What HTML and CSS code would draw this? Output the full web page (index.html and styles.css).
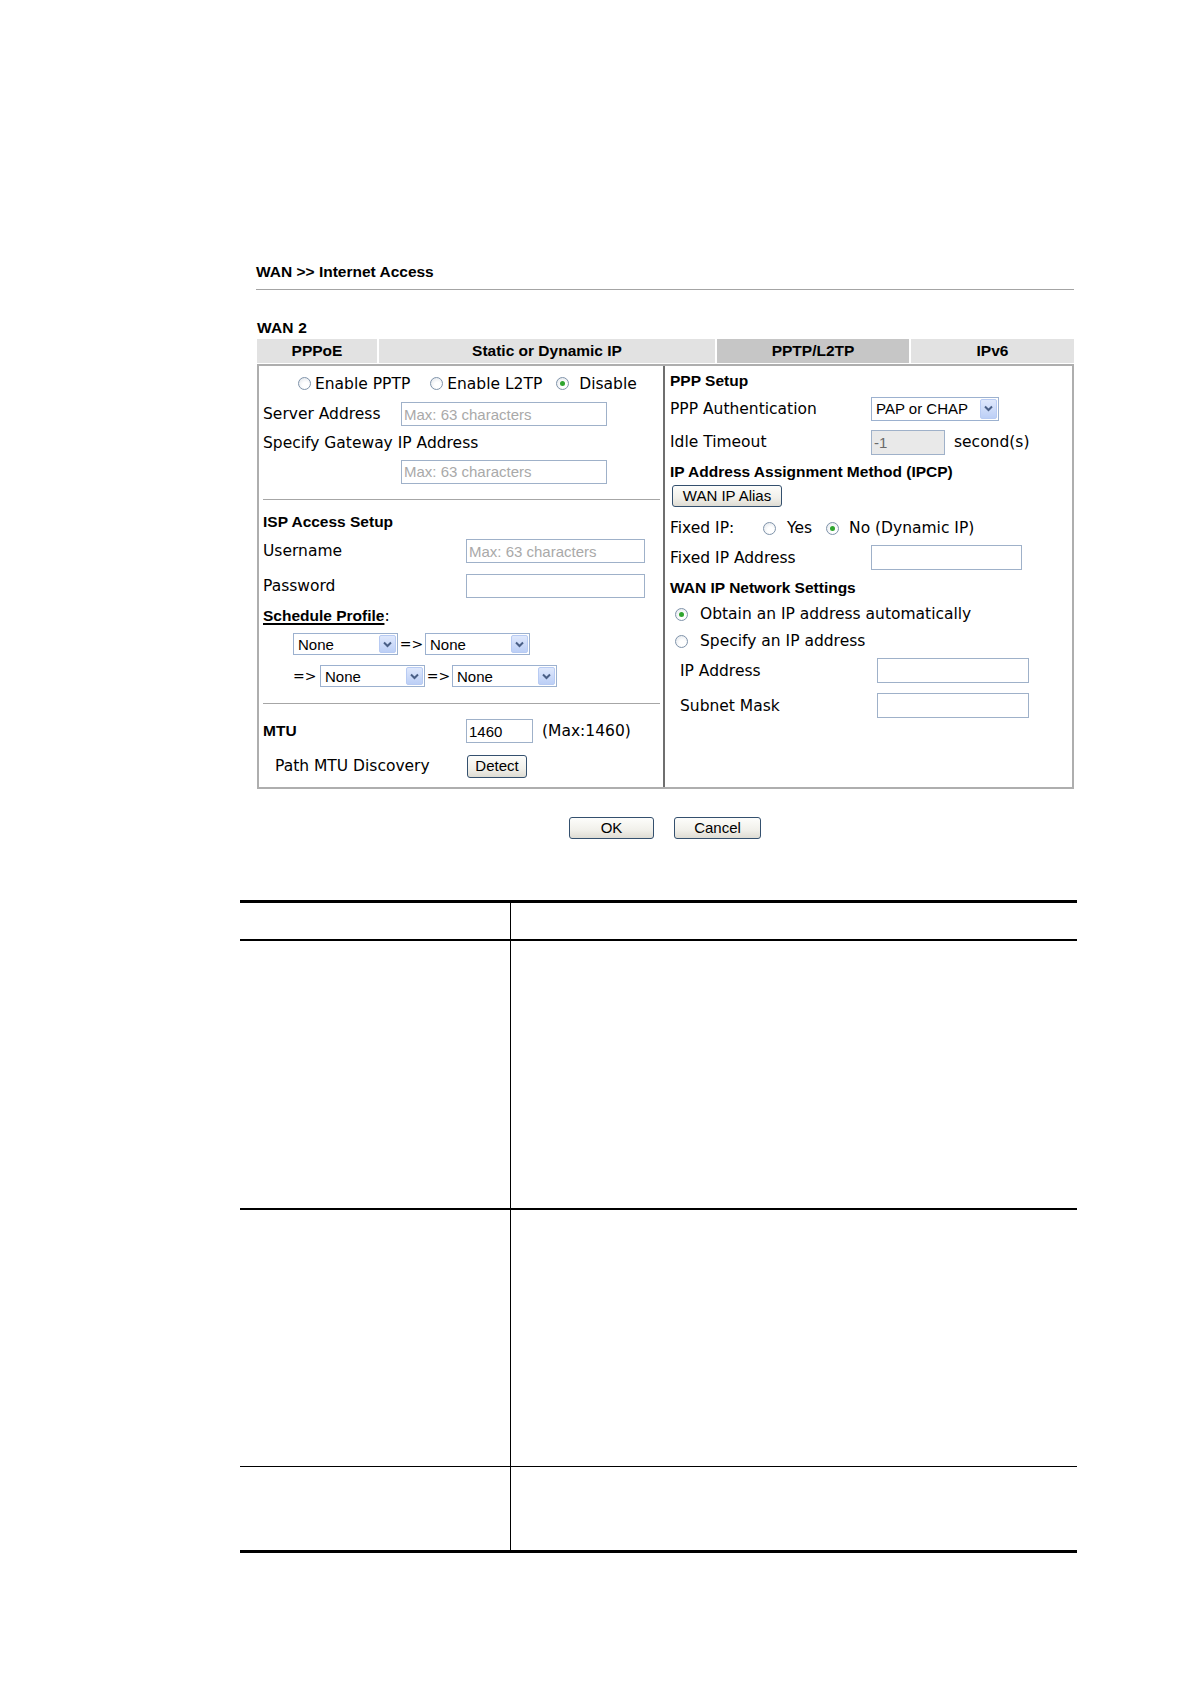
FILE: index.html
```html
<!DOCTYPE html>
<html>
<head>
<meta charset="utf-8">
<title>WAN &gt;&gt; Internet Access</title>
<link rel="stylesheet" href="styles.css">
</head>
<body>
<div class="sheet">
  <div class="title">WAN &gt;&gt; Internet Access</div>
  <div class="rule"></div>
  <div class="wan">WAN 2</div>
  <div class="tabs">
    <div class="tab">PPPoE</div>
    <div class="tab">Static or Dynamic IP</div>
    <div class="tab active">PPTP/L2TP</div>
    <div class="tab">IPv6</div>
  </div>
  <div class="panel">
    <div class="col left">
      <div class="row l1">
        <span class="radio r-first"></span><span class="rt t-pptp">Enable PPTP</span>
        <span class="radio"></span><span class="rt t-l2tp">Enable L2TP</span>
        <span class="radio on"></span><span class="rt t-dis">Disable</span>
      </div>
      <div class="row l2">
        <span class="lbl w138">Server Address</span>
        <input class="inp w206" type="text" placeholder="Max: 63 characters">
      </div>
      <div class="row l3"><span class="lbl">Specify Gateway IP Address</span></div>
      <div class="row l4">
        <span class="lbl w138"></span>
        <input class="inp w206" type="text" placeholder="Max: 63 characters">
      </div>
      <div class="sep sep1"></div>
      <div class="row l-isp"><span class="head">ISP Access Setup</span></div>
      <div class="row l-user">
        <span class="lbl w203">Username</span>
        <input class="inp w179" type="text" placeholder="Max: 63 characters">
      </div>
      <div class="row l-pass">
        <span class="lbl w203">Password</span>
        <input class="inp w179" type="password">
      </div>
      <div class="row l-sched"><span class="head u">Schedule Profile</span><span class="colon">:</span></div>
      <div class="row l-sel1">
        <span class="sel w105"><span class="sel-text">None</span><span class="sel-btn"><svg width="9" height="7" viewBox="0 0 9 7"><polyline points="1,1.5 4.5,5 8,1.5" fill="none" stroke="#4a5f86" stroke-width="2"/></svg></span></span>
        <span class="arrow">=&gt;</span>
        <span class="sel w105"><span class="sel-text">None</span><span class="sel-btn"><svg width="9" height="7" viewBox="0 0 9 7"><polyline points="1,1.5 4.5,5 8,1.5" fill="none" stroke="#4a5f86" stroke-width="2"/></svg></span></span>
      </div>
      <div class="row l-sel2">
        <span class="arrow a-lead">=&gt;</span>
        <span class="sel w105"><span class="sel-text">None</span><span class="sel-btn"><svg width="9" height="7" viewBox="0 0 9 7"><polyline points="1,1.5 4.5,5 8,1.5" fill="none" stroke="#4a5f86" stroke-width="2"/></svg></span></span>
        <span class="arrow">=&gt;</span>
        <span class="sel w105"><span class="sel-text">None</span><span class="sel-btn"><svg width="9" height="7" viewBox="0 0 9 7"><polyline points="1,1.5 4.5,5 8,1.5" fill="none" stroke="#4a5f86" stroke-width="2"/></svg></span></span>
      </div>
      <div class="sep sep2"></div>
      <div class="row l-mtu">
        <span class="lbl w203 head">MTU</span>
        <input class="inp w67" type="text" value="1460">
        <span class="lbl max">(Max:1460)</span>
      </div>
      <div class="row l-pmtu">
        <span class="lbl w192">Path MTU Discovery</span>
        <button class="btn detect">Detect</button>
      </div>
    </div>
    <div class="col right">
      <div class="row r-ppp"><span class="head">PPP Setup</span></div>
      <div class="row r-auth">
        <span class="lbl w201">PPP Authentication</span>
        <span class="sel w128 tall"><span class="sel-text">PAP or CHAP</span><span class="sel-btn"><svg width="9" height="7" viewBox="0 0 9 7"><polyline points="1,1.5 4.5,5 8,1.5" fill="none" stroke="#4a5f86" stroke-width="2"/></svg></span></span>
      </div>
      <div class="row r-idle">
        <span class="lbl w201">Idle Timeout</span>
        <input class="inp w74 dis" type="text" value="-1" disabled>
        <span class="lbl secs">second(s)</span>
      </div>
      <div class="row r-ipcp"><span class="head">IP Address Assignment Method (IPCP)</span></div>
      <div class="row r-alias"><button class="btn alias">WAN IP Alias</button></div>
      <div class="row r-fixed">
        <span class="lbl w93">Fixed IP:</span>
        <span class="radio"></span><span class="rt t-yes">Yes</span>
        <span class="radio on"></span><span class="rt t-no">No (Dynamic IP)</span>
      </div>
      <div class="row r-fixaddr">
        <span class="lbl w201">Fixed IP Address</span>
        <input class="inp w151" type="text">
      </div>
      <div class="row r-wannet"><span class="head">WAN IP Network Settings</span></div>
      <div class="row r-obtain">
        <span class="radio on r-ind"></span><span class="rt t-opt">Obtain an IP address automatically</span>
      </div>
      <div class="row r-spec">
        <span class="radio r-ind"></span><span class="rt t-opt">Specify an IP address</span>
      </div>
      <div class="row r-ip">
        <span class="lbl w197 ind">IP Address</span>
        <input class="inp w152" type="text">
      </div>
      <div class="row r-mask">
        <span class="lbl w197 ind">Subnet Mask</span>
        <input class="inp w152" type="text">
      </div>
    </div>
  </div>
  <div class="actions">
    <button class="btn ok">OK</button>
    <button class="btn cancel">Cancel</button>
  </div>
</div>
<table class="spec">
  <tr class="s-head"><td class="c1"></td><td class="c2"></td></tr>
  <tr class="s-r1"><td class="c1"></td><td class="c2"></td></tr>
  <tr class="s-r2"><td class="c1"></td><td class="c2"></td></tr>
  <tr class="s-r3"><td class="c1"></td><td class="c2"></td></tr>
</table>
</body>
</html>
```
FILE: styles.css
```css
html, body {
  margin: 0;
  padding: 0;
  background: #ffffff;
}
body {
  font-family: "DejaVu Sans", Verdana, sans-serif;
  font-size: 15.5px;
  color: #000;
}
.sheet {
  width: 818px;
  margin-left: 256px;
  padding-top: 263px;
}
.title {
  font: bold 15.5px/18px "Liberation Sans", Arial, sans-serif;
  height: 18px;
}
.rule {
  margin-top: 8px;
  border-top: 1px solid #a4a4a4;
}
.wan {
  margin-top: 29px;
  padding-left: 1px;
  font: bold 15.5px/18px "Liberation Sans", Arial, sans-serif;
  letter-spacing: 0.2px;
  height: 18px;
}
.tabs {
  margin: 2px 0 0 1px;
  height: 24px;
  display: grid;
  grid-template-columns: 120px 336px 192px 1fr;
  column-gap: 2px;
}
.tab {
  background: #e2e2e2;
  font: bold 15.5px/24px "Liberation Sans", Arial, sans-serif;
  text-align: center;
}
.tab.active {
  background: #c6c6c6;
}
.panel {
  margin: 1px 0 0 1px;
  border: 2px solid #aeaeae;
  height: 421px;
  display: grid;
  grid-template-columns: 406px 1fr;
}
.col.left {
  border-right: 2px solid #6f6f6f;
  padding-left: 4px;
}
.col.right {
  padding-left: 5px;
}
.row {
  display: flex;
  align-items: center;
  white-space: nowrap;
}
.lbl {
  display: inline-block;
}
.head {
  font: bold 15.5px/18px "Liberation Sans", Arial, sans-serif;
}
.head.u {
  text-decoration: underline;
  text-underline-offset: 2px;
  text-decoration-thickness: 1.5px;
}
.w93 { width: 93px; }
.w138 { width: 138px; flex: none; }
.w192 { width: 192px; }
.w197 { width: 197px; }
.w201 { width: 201px; }
.w203 { width: 203px; }
.ind { padding-left: 10px; }

/* left column rows */
.l1 { height: 35px; }
.l2 { height: 26px; }
.l3 { height: 32px; }
.l4 { height: 25px; }
.sep {
  border-top: 1px solid #a6a6a6;
  margin-right: 3px;
}
.sep1 { margin-top: 15px; }
.sep2 { margin-top: 16px; }
.l-isp { height: 32px; padding-top: 6px; }
.l-user { height: 26px; }
.l-pass { height: 26px; margin-top: 9px; }
.l-sched { height: 24px; margin-top: 5px; }
.l-sel1 { height: 22px; margin-top: 5px; padding-left: 30px; }
.l-sel2 { height: 22px; margin-top: 10px; padding-left: 30px; }
.l-mtu { height: 24px; margin-top: 15px; }
.l-pmtu { height: 24px; margin-top: 11px; padding-left: 12px; }

.r-first { margin-left: 35px; }
.rt { display: inline-block; }
.t-pptp { margin-left: 4px; margin-right: 20px; }
.t-l2tp { margin-left: 4px; margin-right: 14px; }
.t-dis { margin-left: 10px; }
.t-yes { margin-left: 11px; margin-right: 14px; }
.t-no { margin-left: 10px; }
.t-opt { margin-left: 12px; }
.r-ind { margin-left: 5px; }

.colon { font: 15.5px "DejaVu Sans", sans-serif; }
.arrow {
  display: inline-block;
  width: 27px;
  text-align: center;
  font-size: 14px;
}
.a-lead { width: 27px; text-align: left; }
.max { margin-left: 9px; }
.secs { margin-left: 9px; }

/* right column rows */
.r-ppp { height: 30px; }
.r-auth { height: 25px; }
.r-idle { height: 26px; margin-top: 8px; }
.r-ipcp { height: 20px; margin-top: 7px; }
.r-alias { height: 22px; margin-top: 3px; }
.r-fixed { height: 24px; margin-top: 9px; }
.r-fixaddr { height: 25px; margin-top: 5px; }
.r-wannet { height: 20px; margin-top: 8px; }
.r-obtain { height: 24px; margin-top: 4px; }
.r-spec { height: 24px; margin-top: 3px; }
.r-ip { height: 25px; margin-top: 5px; }
.r-mask { height: 25px; margin-top: 10px; }

/* inputs */
.inp {
  box-sizing: border-box;
  height: 24px;
  margin: 0;
  padding: 0 2px;
  border: 1px solid #9fb1c9;
  background: #fff;
  font: 15px "Liberation Sans", Arial, sans-serif;
  color: #000;
  outline: none;
}
.inp::placeholder {
  color: #a9a9a9;
  opacity: 1;
}
.inp.dis {
  background: #e9e9e9;
  color: #6a6a6a;
  height: 25px;
}
.w67 { width: 67px; }
.w74 { width: 74px; }
.w151 { width: 151px; height: 25px; }
.w152 { width: 152px; height: 25px; }
.w179 { width: 179px; }
.w206 { width: 206px; }

/* select look-alike */
.sel {
  box-sizing: border-box;
  display: inline-flex;
  align-items: center;
  height: 22px;
  border: 1px solid #9cb1cf;
  background: #fff;
  font: 15px "Liberation Sans", Arial, sans-serif;
}
.sel.tall { height: 24px; }
.w105 { width: 105px; }
.w128 { width: 128px; }
.sel-text {
  flex: 1;
  padding-left: 4px;
}
.sel-btn {
  box-sizing: border-box;
  width: 17px;
  height: 18px;
  margin-right: 1px;
  border: 1px solid #b8cbf3;
  border-radius: 2px;
  background: linear-gradient(#dfe8fc, #bccff6);
  display: flex;
  align-items: center;
  justify-content: center;
}
.sel.tall .sel-btn { height: 20px; }

/* radios */
.radio {
  box-sizing: border-box;
  display: inline-block;
  flex: none;
  width: 13px;
  height: 13px;
  border-radius: 50%;
  border: 1px solid #7f93aa;
  background: radial-gradient(circle at 60% 65%, #ffffff 30%, #dde2e8 100%);
  position: relative;
}
.radio.on::after {
  content: "";
  position: absolute;
  left: 3px;
  top: 3px;
  width: 5px;
  height: 5px;
  border-radius: 50%;
  background: #2fa52f;
}

/* buttons */
.btn {
  box-sizing: border-box;
  margin: 0;
  padding: 0;
  height: 22px;
  border: 1px solid #34506e;
  border-radius: 3px;
  background: linear-gradient(#fdfdfb 0%, #f1f0ea 60%, #dedcd3 100%);
  font: 15px/20px "Liberation Sans", Arial, sans-serif;
  color: #000;
}
.detect { width: 60px; height: 23px; }
.alias { width: 110px; margin-left: 2px; }
.actions {
  display: flex;
  margin-top: 28px;
  padding-left: 313px;
  gap: 20px;
}
.ok { width: 85px; }
.cancel { width: 87px; }

/* bottom spec table */
.spec {
  margin: 61px 0 0 240px;
  width: 837px;
  border-collapse: collapse;
  border-top: 3px solid #000;
  border-bottom: 3px solid #000;
}
.spec td {
  padding: 0;
}
.spec .c1 {
  width: 270px;
  border-right: 1px solid #000;
}
.s-head td { height: 36px; border-bottom: 2px solid #000; }
.s-r1 td { height: 267px; border-bottom: 2px solid #000; }
.s-r2 td { height: 256px; border-bottom: 1px solid #000; }
.s-r3 td { height: 83px; }
```
